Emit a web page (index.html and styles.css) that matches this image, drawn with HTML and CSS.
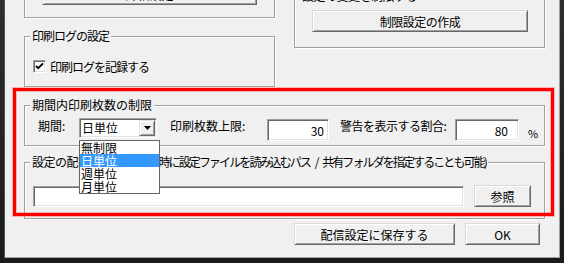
FILE: index.html
```html
<!DOCTYPE html>
<html lang="ja">
<head>
    <meta charset="UTF-8">
    <title>配信設定</title>
    <link rel="stylesheet" href="styles.css">
</head>
<body>
    <div class="frame">
        <div class="client">
            <div class="top-row">
                <div class="col">
                    <div class="group group-cut">
                        <button type="button" class="btn btn-wide">詳細設定</button>
                    </div>
                    <div class="group group-log">
                        <div class="caption cap-log">印刷ログの設定</div>
                        <label class="check-row">
                            <span class="checkbox">
                                <svg width="9" height="9" viewBox="0 0 9 9"><path d="M1 4 L3.2 6.2 L8 1.4" fill="none" stroke="#000" stroke-width="2"/></svg>
                            </span>
                            <span class="check-text">印刷ログを記録する</span>
                        </label>
                    </div>
                </div>
                <div class="group group-restrict">
                    <div class="cut-text">設定の変更を制限する</div>
                    <button type="button" class="btn btn-create">制限設定の作成</button>
                </div>
            </div>

            <div class="group group-limit">
                <div class="caption">期間内印刷枚数の制限</div>
                <div class="limit-row">
                    <span class="field-label lbl-period">期間:</span>
                    <div class="combo">
                        <span class="combo-text">日単位</span>
                        <span class="combo-btn">
                            <svg width="7" height="4" viewBox="0 0 7 4"><path d="M0 0 H7 L3.5 4 Z" fill="#000"/></svg>
                        </span>
                        <ul class="combo-list">
                            <li>無制限</li>
                            <li class="selected">日単位</li>
                            <li>週単位</li>
                            <li>月単位</li>
                        </ul>
                    </div>
                    <span class="field-label lbl-limit">印刷枚数上限:</span>
                    <input type="text" class="textbox num num-limit" value="30">
                    <span class="field-label lbl-warn">警告を表示する割合:</span>
                    <input type="text" class="textbox num num-warn" value="80">
                    <span class="percent">%</span>
                </div>
            </div>

            <div class="group group-path">
                <div class="caption"><span class="cap-head">設定の配布先パス（配信</span><span class="cap-tail">時に設定ファイルを読み込むパス<span class="cap-sep"> / </span>共有フォルダを指定することも可能)</span></div>
                <div class="path-row">
                    <input type="text" class="textbox path-box" value="">
                    <button type="button" class="btn btn-browse">参照</button>
                </div>
            </div>

            <div class="dialog-buttons">
                <button type="button" class="btn btn-save">配信設定に保存する</button>
                <button type="button" class="btn btn-ok">OK</button>
            </div>

            <div class="highlight-box"></div>
        </div>
    </div>
</body>
</html>
```

FILE: styles.css
```css
body {
    margin: 0;
    font-family: "Noto Sans CJK JP", sans-serif;
    font-size: 12px;
    color: #000;
    background: #1c1c1c;
}
.frame {
    width: 564px;
    height: 263px;
    background: linear-gradient(#2e2e2e, #1a1a1a);
    overflow: hidden;
}
.client {
    position: relative;
    box-sizing: border-box;
    width: 556px;
    height: 258px;
    margin-left: 4px;
    padding-left: 19px;
    background: #f0f0f0;
    border-left: 1px solid #505050;
    border-right: 1px solid #a0a0a0;
    border-bottom: 1px solid #a0a0a0;
    overflow: hidden;
}

/* group boxes */
.group {
    box-sizing: border-box;
    border: 1px solid #a0a0a0;
    box-shadow: inset 1px 1px 0 #fff, 1px 1px 0 #fff;
}
.caption {
    width: fit-content;
    height: 12px;
    line-height: 12px;
    margin: -7px 0 0 5px;
    padding: 0 2px;
    background: #f0f0f0;
    white-space: nowrap;
}
.cap-log {
    letter-spacing: -1px;
}
.cap-head {
    letter-spacing: -0.5px;
}
.cap-tail {
    letter-spacing: -1.9px;
}
.cap-sep {
    letter-spacing: 0;
    padding-left: 2px;
}

.top-row {
    display: grid;
    grid-template-columns: 251px 251px;
    column-gap: 19px;
    align-items: start;
    margin-top: -30px;
}
.group-cut {
    padding: 12px 0 12px 17px;
}
.group-log {
    margin-top: 18px;
    padding-bottom: 13px;
}
.check-row {
    display: flex;
    align-items: center;
    height: 13px;
    margin: 18px 0 0 8px;
}
.checkbox {
    box-sizing: border-box;
    display: flex;
    align-items: center;
    justify-content: center;
    width: 13px;
    height: 13px;
    background: #fff;
    border: 1px solid;
    border-color: #a0a0a0 #fff #fff #a0a0a0;
    box-shadow: inset 1px 1px 0 #696969, inset -1px -1px 0 #e3e3e3;
}
.check-text {
    margin-left: 4px;
    line-height: 12px;
    letter-spacing: -1px;
}
.group-restrict {
    padding: 19px 0 15px 17px;
}
.cut-text {
    line-height: 12px;
    margin-left: -10px;
    letter-spacing: -0.5px;
}

/* buttons */
.btn {
    box-sizing: border-box;
    height: 22px;
    padding: 0;
    font: inherit;
    color: #000;
    background: #f0f0f0;
    border: 1px solid;
    border-color: #dadada #696969 #696969 #dadada;
    box-shadow: inset 1px 1px 0 #fff, inset -1px -1px 0 #a0a0a0;
}
.btn-wide {
    display: block;
    width: 215px;
}
.btn-create {
    display: block;
    width: 216px;
    margin-top: 8px;
    letter-spacing: -0.5px;
}

/* period limit */
.group-limit {
    width: 521px;
    margin-top: 18px;
    padding-bottom: 4px;
}
.limit-row {
    display: flex;
    align-items: flex-start;
    height: 23px;
    margin-top: 7px;
    padding-left: 13px;
}
.field-label {
    line-height: 12px;
    margin-top: 2px;
    white-space: nowrap;
}
.lbl-period {
    width: 41px;
}
.lbl-limit {
    width: 97px;
    margin-left: 13px;
}
.lbl-warn {
    width: 115px;
    margin-left: 11px;
    letter-spacing: -0.5px;
}
.combo {
    position: relative;
    box-sizing: border-box;
    display: flex;
    align-items: center;
    width: 78px;
    height: 20px;
    padding: 1px;
    background: #fff;
    border: 1px solid;
    border-color: #a0a0a0 #fff #fff #a0a0a0;
    box-shadow: inset 1px 1px 0 #696969, inset -1px -1px 0 #e3e3e3;
}
.combo-text {
    flex: 1;
    padding-left: 1px;
    line-height: 16px;
}
.combo-btn {
    box-sizing: border-box;
    display: flex;
    align-items: center;
    justify-content: center;
    width: 16px;
    height: 16px;
    background: #f0f0f0;
    border: 1px solid;
    border-color: #e3e3e3 #696969 #696969 #e3e3e3;
    box-shadow: inset 1px 1px 0 #fff, inset -1px -1px 0 #a0a0a0;
}
.combo-list {
    position: absolute;
    left: -1px;
    top: 21px;
    z-index: 2;
    box-sizing: border-box;
    width: 81px;
    margin: 0;
    padding: 0;
    list-style: none;
    background: #fff;
    border: 1px solid #646464;
}
.combo-list li {
    height: 13px;
    line-height: 13px;
    padding-left: 1px;
}
.combo-list li.selected {
    background: #3399ff;
    color: #fff;
}
.textbox {
    box-sizing: border-box;
    height: 22px;
    margin: 1px 0 0;
    font: inherit;
    color: #000;
    background: #fff;
    border: 1px solid;
    border-color: #a0a0a0 #fff #fff #a0a0a0;
    box-shadow: inset 1px 1px 0 #696969, inset -1px -1px 0 #e3e3e3;
    outline: none;
}
.num {
    text-align: right;
    padding: 0 4px 0 0;
}
.num-limit {
    width: 62px;
}
.num-warn {
    width: 64px;
    padding-right: 10px;
}
.percent {
    margin: 9px 0 0 9px;
    font-size: 11px;
    line-height: 12px;
}

/* path */
.group-path {
    width: 521px;
    margin-top: 16px;
    padding-bottom: 11px;
}
.path-row {
    display: flex;
    align-items: flex-start;
    margin-top: 17px;
    padding-left: 8px;
}
.path-box {
    width: 431px;
    height: 21px;
    padding: 0 3px;
}
.btn-browse {
    width: 57px;
    margin-left: 10px;
}

/* bottom buttons */
.dialog-buttons {
    display: flex;
    margin-top: 4px;
    padding-left: 270px;
}
.btn-save {
    width: 161px;
}
.btn-ok {
    width: 75px;
    margin-left: 10px;
}

/* red annotation frame */
.highlight-box {
    position: absolute;
    left: 8px;
    top: 88px;
    box-sizing: border-box;
    width: 541px;
    height: 128px;
    border: 3px solid #ff0000;
    box-shadow: 0 0 0 1px rgba(255, 0, 0, 0.25), inset 0 0 0 1px rgba(255, 0, 0, 0.25);
    pointer-events: none;
}
```
